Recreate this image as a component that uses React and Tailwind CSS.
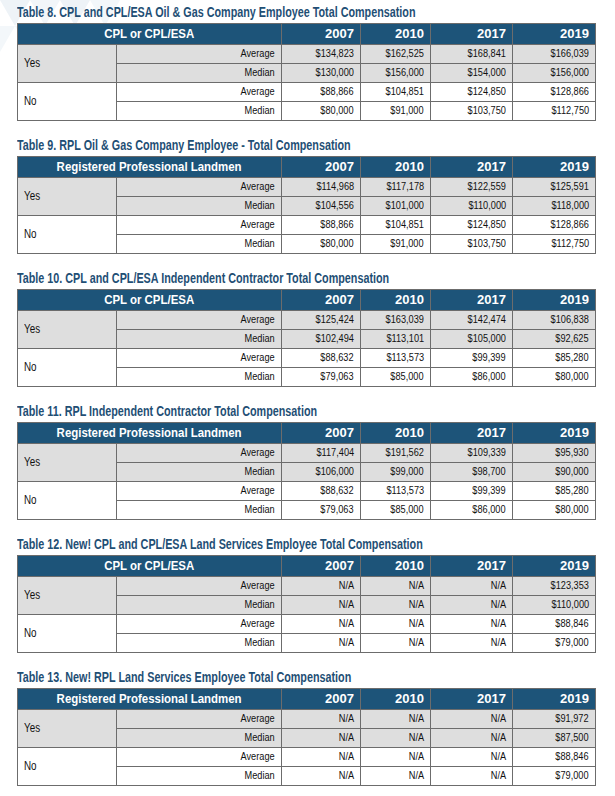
import React from 'react';

const YEARS = ['2007', '2010', '2017', '2019'];

const tables = [
  {
    title: 'Table 8. CPL and CPL/ESA Oil & Gas Company Employee Total Compensation',
    head: 'CPL or CPL/ESA',
    yes: [
      ['$134,823', '$162,525', '$168,841', '$166,039'],
      ['$130,000', '$156,000', '$154,000', '$156,000'],
    ],
    no: [
      ['$88,866', '$104,851', '$124,850', '$128,866'],
      ['$80,000', '$91,000', '$103,750', '$112,750'],
    ],
  },
  {
    title: 'Table 9. RPL Oil & Gas Company Employee - Total Compensation',
    head: 'Registered Professional Landmen',
    yes: [
      ['$114,968', '$117,178', '$122,559', '$125,591'],
      ['$104,556', '$101,000', '$110,000', '$118,000'],
    ],
    no: [
      ['$88,866', '$104,851', '$124,850', '$128,866'],
      ['$80,000', '$91,000', '$103,750', '$112,750'],
    ],
  },
  {
    title: 'Table 10. CPL and CPL/ESA Independent Contractor Total Compensation',
    head: 'CPL or CPL/ESA',
    yes: [
      ['$125,424', '$163,039', '$142,474', '$106,838'],
      ['$102,494', '$113,101', '$105,000', '$92,625'],
    ],
    no: [
      ['$88,632', '$113,573', '$99,399', '$85,280'],
      ['$79,063', '$85,000', '$86,000', '$80,000'],
    ],
  },
  {
    title: 'Table 11. RPL Independent Contractor Total Compensation',
    head: 'Registered Professional Landmen',
    yes: [
      ['$117,404', '$191,562', '$109,339', '$95,930'],
      ['$106,000', '$99,000', '$98,700', '$90,000'],
    ],
    no: [
      ['$88,632', '$113,573', '$99,399', '$85,280'],
      ['$79,063', '$85,000', '$86,000', '$80,000'],
    ],
  },
  {
    title: 'Table 12. New! CPL and CPL/ESA Land Services Employee Total Compensation',
    head: 'CPL or CPL/ESA',
    yes: [
      ['N/A', 'N/A', 'N/A', '$123,353'],
      ['N/A', 'N/A', 'N/A', '$110,000'],
    ],
    no: [
      ['N/A', 'N/A', 'N/A', '$88,846'],
      ['N/A', 'N/A', 'N/A', '$79,000'],
    ],
  },
  {
    title: 'Table 13. New! RPL Land Services Employee Total Compensation',
    head: 'Registered Professional Landmen',
    yes: [
      ['N/A', 'N/A', 'N/A', '$91,972'],
      ['N/A', 'N/A', 'N/A', '$87,500'],
    ],
    no: [
      ['N/A', 'N/A', 'N/A', '$88,846'],
      ['N/A', 'N/A', 'N/A', '$79,000'],
    ],
  },
];

// condensed look: Liberation Sans squeezed horizontally
const cell = 'border border-[#6c6c6c] text-right text-[11.5px] text-[#111] whitespace-nowrap';

function Group({ label, rows, shaded }) {
  const bg = shaded ? 'bg-[#dedede]' : 'bg-white';
  return rows.map((vals, i) => (
    <tr key={i} className={`h-[19px] ${bg}`}>
      {i === 0 && (
        <td rowSpan={2} className="border border-[#6c6c6c] pl-[6px] text-[12px] text-[#111]">
          <span className="inline-block origin-left scale-x-[0.82]">{label}</span>
        </td>
      )}
      <td className={`${cell} pr-[6px]`}>
        <span className="inline-block origin-right scale-x-[0.8]">
          {i === 0 ? 'Average' : 'Median'}
        </span>
      </td>
      {vals.map((v, j) => (
        <td key={j} className={`${cell} pr-[6px]`}>
          <span className="inline-block origin-right scale-x-[0.8]">{v}</span>
        </td>
      ))}
    </tr>
  ));
}

function CompTable({ t }) {
  return (
    <div className="h-[133px]">
      <h2 className="h-[23px] pt-[4px] text-[14px] leading-[17px] font-bold text-[#1f4f75] whitespace-nowrap">
        <span className="inline-block origin-left scale-x-[0.77]">{t.title}</span>
      </h2>
      <table className="w-[578px] table-fixed border-collapse">
        <colgroup>
          <col className="w-[99px]" />
          <col className="w-[165px]" />
          <col className="w-[79px]" />
          <col className="w-[70px]" />
          <col className="w-[82px]" />
          <col className="w-[83px]" />
        </colgroup>
        <thead>
          <tr className="h-[20px] bg-[#1d5479] text-white font-bold text-[13px]">
            <th colSpan={2} className="border border-[#6c6c6c] text-center whitespace-nowrap">
              <span className="inline-block scale-x-[0.88]">{t.head}</span>
            </th>
            {YEARS.map((y) => (
              <th key={y} className="border border-[#6c6c6c] pr-[6px] text-right">
                {y}
              </th>
            ))}
          </tr>
        </thead>
        <tbody>
          <Group label="Yes" rows={t.yes} shaded />
          <Group label="No" rows={t.no} />
        </tbody>
      </table>
    </div>
  );
}

export default function App() {
  return (
    <div className="relative w-[615px] h-[796px] bg-white overflow-hidden font-['Liberation_Sans',Arial,sans-serif]">
      <svg className="absolute left-0 top-0" width="170" height="60" viewBox="0 0 170 60" fill="#eef3f7">
        <polygon points="0,0 30,0 15,26" />
        <polygon points="30,0 60,0 45,26" fill="#f2f6f9" />
        <polygon points="15,26 45,26 30,52" fill="#f2f6f9" />
        <polygon points="60,0 90,0 75,26" />
        <polygon points="90,0 120,0 105,26" fill="#f3f7fa" />
        <polygon points="0,26 15,26 0,52" fill="#f3f7fa" />
      </svg>
      <div className="relative px-[17px]">
        {tables.map((t, i) => (
          <CompTable key={i} t={t} />
        ))}
      </div>
    </div>
  );
}
